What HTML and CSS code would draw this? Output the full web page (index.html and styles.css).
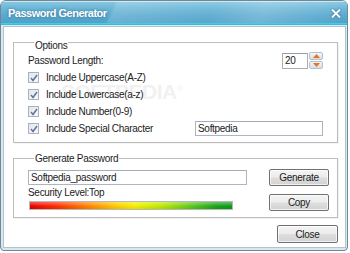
FILE: index.html
```html
<!DOCTYPE html>
<html>
<head>
<meta charset="utf-8">
<link rel="stylesheet" href="styles.css">
</head>
<body>
<div class="window">
  <div class="titlebar">
    <span class="title">Password Generator</span>
    <svg class="close" width="10" height="9" viewBox="0 0 10 9"><path d="M1 0.5 L9 8.5 M9 0.5 L1 8.5" stroke="#fff" stroke-width="1.8" fill="none"/></svg>
  </div>
  <div class="client">
    <span class="watermark">SOFTPEDIA<sup>®</sup></span>
    <div class="group options">
      <div class="group-title">Options</div>
      <div class="row">
        <span>Password Length:</span>
        <div class="spin">
          <span class="spin-input">20</span>
          <span class="spin-btns">
            <span class="spin-btn"><svg width="7" height="4" viewBox="0 0 7 4"><path d="M0 4 L3.5 0 L7 4 Z" fill="#e8731f"/></svg></span>
            <span class="spin-btn"><svg width="7" height="4" viewBox="0 0 7 4"><path d="M0 0 L3.5 4 L7 0 Z" fill="#e8731f"/></svg></span>
          </span>
        </div>
      </div>
      <div class="row"><span class="check"><span class="box"><svg width="8" height="8" viewBox="0 0 8 8"><path d="M1 4 L3 6.5 L7 1" stroke="#5f73a0" stroke-width="1.5" fill="none"/></svg></span>Include Uppercase(A-Z)</span></div>
      <div class="row"><span class="check"><span class="box"><svg width="8" height="8" viewBox="0 0 8 8"><path d="M1 4 L3 6.5 L7 1" stroke="#5f73a0" stroke-width="1.5" fill="none"/></svg></span>Include Lowercase(a-z)</span></div>
      <div class="row"><span class="check"><span class="box"><svg width="8" height="8" viewBox="0 0 8 8"><path d="M1 4 L3 6.5 L7 1" stroke="#5f73a0" stroke-width="1.5" fill="none"/></svg></span>Include Number(0-9)</span></div>
      <div class="row"><span class="check"><span class="box"><svg width="8" height="8" viewBox="0 0 8 8"><path d="M1 4 L3 6.5 L7 1" stroke="#5f73a0" stroke-width="1.5" fill="none"/></svg></span>Include Special Character</span><span class="textbox special">Softpedia</span></div>
    </div>
    <div class="group gen">
      <div class="group-title">Generate Password</div>
      <div class="gen-body">
        <div class="gen-left">
          <span class="textbox pw">Softpedia_password</span>
          <div class="level">Security Level:Top</div>
          <div class="bar"></div>
        </div>
        <div class="gen-right">
          <span class="btn">Generate</span>
          <span class="btn copy">Copy</span>
        </div>
      </div>
    </div>
    <div class="footer"><span class="btn close-btn">Close</span></div>
  </div>
</div>
</body>
</html>
```
FILE: styles.css
```css
html, body {
  margin: 0;
  padding: 0;
  background: #ffffff;
}
body {
  width: 350px;
  height: 253px;
  overflow: hidden;
  font-family: "Liberation Sans", Arial, sans-serif;
  font-size: 10px;
  letter-spacing: -0.3px;
  color: #1b1b1b;
}
.window {
  width: 346px;
  height: 249px;
  border: 1px solid #6f8796;
  border-radius: 6px 6px 4px 4px;
  background: #dbe7ee;
  display: flex;
  flex-direction: column;
  overflow: hidden;
}
.titlebar {
  height: 24px;
  flex: none;
  display: flex;
  align-items: center;
  justify-content: space-between;
  padding: 0 6px 0 7px;
  background:
    linear-gradient(to bottom, rgba(255,255,255,0) 0, rgba(255,255,255,0) 22px, #3fd8ee 22px, #2fb6d6 24px),
    linear-gradient(115deg, rgba(0,0,0,0) 0, rgba(0,0,0,0) 32%, rgba(255,255,255,0.16) 33%, rgba(255,255,255,0.06) 60%, rgba(255,255,255,0.2) 75%, rgba(255,255,255,0) 100%),
    linear-gradient(to bottom, #8ccae2 0, #6cb7d8 30%, #5aa9cf 60%, #4f9ec6 100%);
  box-shadow: inset 0 1px 0 rgba(255,255,255,0.55);
}
.title {
  color: #ffffff;
  font-weight: bold;
  font-size: 11px;
  letter-spacing: -0.5px;
  text-shadow: 0 0 3px rgba(20,60,90,0.55);
}
.close {
  display: block;
  margin-top: 1px;
  filter: drop-shadow(0 0 1px rgba(30,70,100,0.7));
}
.client {
  position: relative;
  flex: 1;
  margin: 1px 1px 2px 2px;
  background: #ffffff;
  border: 1px solid #b6c3cc;
  display: flex;
  flex-direction: column;
}
.watermark {
  position: absolute;
  left: 57px;
  top: 53px;
  font-size: 21px;
  letter-spacing: -0.5px;
  color: #f1f1f1;
  font-weight: bold;
}
.watermark sup {
  font-size: 8px;
  font-weight: normal;
}
.group {
  position: relative;
  border: 1px solid #bcbcbc;
  box-shadow: inset 1px 1px 0 #ffffff, 1px 1px 0 #f4f4f4;
  margin: 0 7px 0 9px;
}
.group-title {
  width: fit-content;
  margin: -7px 0 0 6px;
  padding: 0 1px;
  background: #ffffff;
  line-height: 13px;
  position: relative;
}
.options {
  margin-top: 15px;
  padding: 3px 14px 5px 14px;
}
.row {
  height: 17px;
  display: flex;
  align-items: center;
  justify-content: space-between;
  position: relative;
}
.check {
  display: flex;
  align-items: center;
}
.box {
  width: 9px;
  height: 9px;
  border: 1px solid #aab2bb;
  background: linear-gradient(to bottom right, #e2e6eb, #f7f8fa);
  margin-right: 7px;
  display: flex;
  align-items: center;
  justify-content: center;
}
.box svg {
  display: block;
}
.spin {
  display: flex;
  align-items: center;
}
.spin-input {
  width: 22px;
  height: 14px;
  border: 1px solid #abadb3;
  border-top-color: #9a9ca3;
  background: #fff;
  line-height: 14px;
  padding-left: 2px;
  margin-right: 1px;
}
.spin-btns {
  display: flex;
  flex-direction: column;
  gap: 1px;
}
.spin-btn {
  width: 12px;
  height: 6px;
  border: 1px solid #b4c0cc;
  border-radius: 2px;
  background: linear-gradient(to bottom, #f2f5f8, #d5dee7);
  display: flex;
  align-items: center;
  justify-content: center;
}
.spin-btn svg {
  display: block;
}
.textbox {
  display: block;
  height: 13px;
  border: 1px solid #abb6c2;
  border-top-color: #a3adb8;
  background: #ffffff;
  line-height: 13px;
  padding-left: 2px;
  box-sizing: content-box;
}
.special {
  width: 124px;
}
.gen {
  margin-top: 15px;
  padding: 0 8px 6px 14px;
}
.gen-body {
  display: flex;
  justify-content: space-between;
  margin-top: 4px;
}
.gen-left {
  width: 218px;
  display: flex;
  flex-direction: column;
}
.pw {
  margin-top: 1px;
  width: 215px;
}
.level {
  margin-top: 1px;
  line-height: 14px;
}
.bar {
  margin: 1px 0 0 1px;
  width: 204px;
  height: 9px;
  box-sizing: border-box;
  border: 1px solid #b8b8b8;
  background:
    linear-gradient(to bottom, rgba(255,255,255,0.35) 0, rgba(255,255,255,0.1) 45%, rgba(0,0,0,0) 55%, rgba(0,0,0,0.08) 100%),
    linear-gradient(to right, #e80000 0, #ff2a00 12%, #ff8a00 30%, #ffc800 42%, #f4f000 52%, #b8e800 66%, #5cc820 80%, #19a51a 92%, #109a18 100%);
}
.gen-right {
  width: 60px;
  display: flex;
  flex-direction: column;
  gap: 8px;
}
.btn {
  display: flex;
  align-items: center;
  justify-content: center;
  height: 15px;
  border: 1px solid #707070;
  border-radius: 2px;
  background: linear-gradient(to bottom, #f4f4f4 0, #ececec 48%, #dedede 52%, #d2d2d2 100%);
  box-shadow: inset 0 0 0 1px rgba(255,255,255,0.7);
  color: #1b1b1b;
}
.footer {
  display: flex;
  justify-content: flex-end;
  margin: 7px 7px 0 0;
}
.close-btn {
  width: 59px;
  height: 16px;
}
```
